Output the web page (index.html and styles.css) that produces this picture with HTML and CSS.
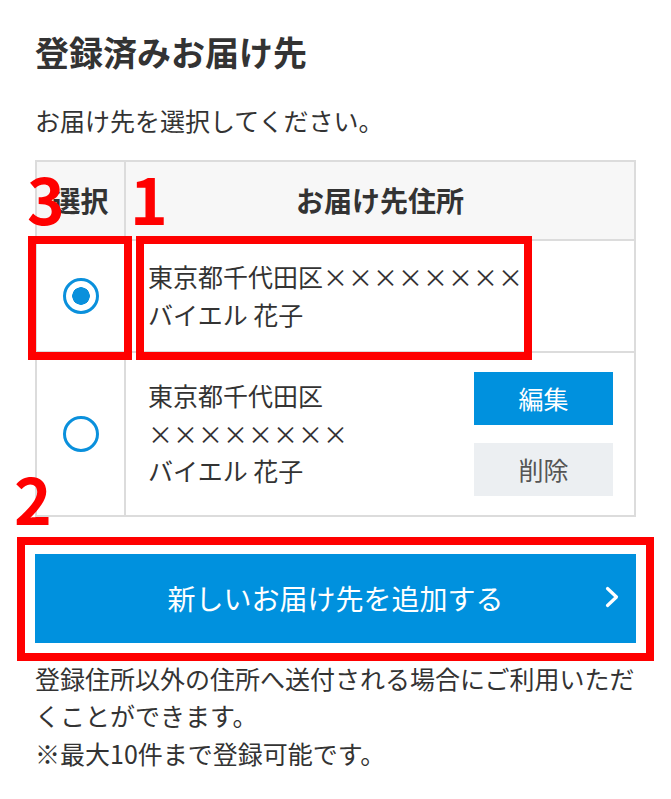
FILE: index.html
```html
<!DOCTYPE html>
<html lang="ja">
<head>
<meta charset="utf-8">
<title>登録済みお届け先</title>
<link rel="stylesheet" href="styles.css">
</head>
<body>
<div class="page">
  <h1 class="title">登録済みお届け先</h1>
  <p class="lead">お届け先を選択してください。</p>
  <table class="addr-table">
    <thead>
      <tr>
        <th class="col-sel">選択</th>
        <th class="col-addr">お届け先住所</th>
      </tr>
    </thead>
    <tbody>
      <tr class="row-1">
        <td class="cell-sel"><span class="radio is-checked"></span></td>
        <td class="cell-addr">
          <div class="addr">東京都千代田区<span class="nb">××××××××</span><br>バイエル 花子</div>
        </td>
      </tr>
      <tr class="row-2">
        <td class="cell-sel"><span class="radio"></span></td>
        <td class="cell-addr">
          <div class="addr-wrap">
            <div class="addr">東京都千代田区<span class="nb">××××××××</span><br>バイエル 花子</div>
            <div class="actions">
              <button class="btn btn-edit" type="button">編集</button>
              <button class="btn btn-del" type="button">削除</button>
            </div>
          </div>
        </td>
      </tr>
    </tbody>
  </table>
  <a class="btn-add" href="#">新しいお届け先を追加する<svg class="chev" width="14" height="22" viewBox="0 0 14 22"><polyline points="2.5,2.5 11.5,11 2.5,19.5" fill="none" stroke="#fff" stroke-width="3.2" stroke-linecap="round" stroke-linejoin="round"/></svg></a>
  <p class="note">登録住所以外の住所へ送付される場合にご利用いただくことができます。<br>※最大10件まで登録可能です。</p>

  <div class="mark-box box-3"></div>
  <div class="mark-box box-1"></div>
  <div class="mark-box box-2"></div>
  <span class="mark-num num-3">3</span>
  <span class="mark-num num-1">1</span>
  <span class="mark-num num-2">2</span>
</div>
</body>
</html>
```
FILE: styles.css
```css
body {
  margin: 0;
  background: #fff;
  font-family: "Noto Sans CJK JP", "Noto Sans", sans-serif;
  color: #333;
}

.page {
  position: relative;
  padding: 26px 35px 0;
}

.title {
  margin: 0;
  font-size: 34px;
  line-height: 51px;
  font-weight: 700;
}

.lead {
  margin: 25px 0 0;
  font-size: 25px;
  line-height: 37.5px;
}

.addr-table {
  width: 100%;
  table-layout: fixed;
  border-collapse: separate;
  border-spacing: 0;
  border-top: 2px solid #dcdcdc;
  border-left: 2px solid #dcdcdc;
  margin-top: 20px;
}

.addr-table th,
.addr-table td {
  border-right: 2px solid #dcdcdc;
  border-bottom: 2px solid #dcdcdc;
  padding: 0;
  box-sizing: border-box;
}

.addr-table th {
  background: #f7f7f7;
  height: 79px;
  font-size: 28px;
  line-height: 42px;
  font-weight: 700;
  text-align: center;
  vertical-align: middle;
}

.col-sel {
  width: 89px;
}

.cell-sel {
  vertical-align: middle;
}

.cell-addr {
  padding: 17.5px 21px 17.5px 22px !important;
  font-size: 25px;
  line-height: 37.5px;
  vertical-align: middle;
}

.row-2 .cell-addr {
  padding-top: 19px !important;
  padding-bottom: 19px !important;
}

.nb {
  white-space: nowrap;
}

.radio {
  display: block;
  margin: 0 auto;
  width: 36px;
  height: 36px;
  border: 3px solid #0a90dc;
  border-radius: 50%;
  box-sizing: border-box;
}

.radio.is-checked {
  background: radial-gradient(circle, #0a90dc 0 8.5px, transparent 9px);
}

.addr-wrap {
  display: flex;
  align-items: center;
  justify-content: space-between;
  gap: 12px;
}

.addr-wrap .addr {
  flex: 1;
  min-width: 0;
}

.actions {
  flex: none;
  width: 139px;
  display: flex;
  flex-direction: column;
  gap: 18px;
}

.btn {
  display: block;
  width: 100%;
  height: 53px;
  border: 0;
  padding: 0;
  margin: 0;
  font-family: inherit;
  font-size: 25px;
  line-height: 53px;
}

.btn-edit {
  background: #0091de;
  color: #fff;
}

.btn-del {
  background: #eceff2;
  color: #555;
}

.btn-add {
  display: block;
  position: relative;
  margin-top: 37px;
  height: 89px;
  background: #0091de;
  color: #fff;
  font-size: 28px;
  line-height: 89px;
  text-align: center;
  text-decoration: none;
}

.chev {
  position: absolute;
  right: 17px;
  top: 32px;
}

.note {
  margin: 17px 0 0;
  font-size: 25px;
  line-height: 37.5px;
}

.mark-box {
  position: absolute;
  border: 8px solid #ff0000;
  box-sizing: border-box;
}

.box-3 { left: 28px; top: 236px; width: 104px; height: 124px; }
.box-1 { left: 136px; top: 236px; width: 396px; height: 124px; }
.box-2 { left: 17px; top: 537px; width: 637px; height: 124px; }

.mark-num {
  position: absolute;
  font-size: 64px;
  line-height: 1;
  font-weight: 700;
  color: #ff0000;
}

.num-3 { left: 27px; top: 165px; }
.num-1 { left: 130px; top: 165px; }
.num-2 { left: 14px; top: 465px; }
```
